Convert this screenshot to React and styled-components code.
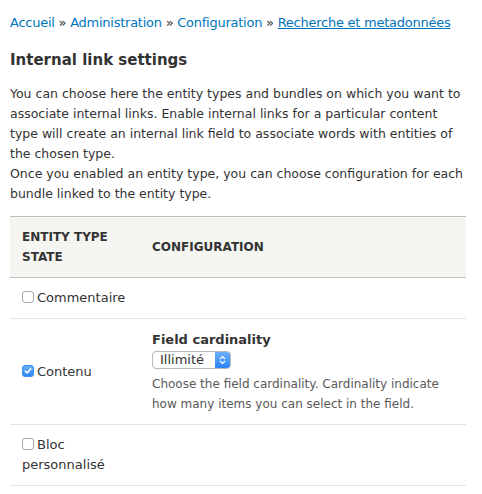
import React from 'react'
import styled, { createGlobalStyle } from 'styled-components'

const LinkColor = "#0074bd";
const TextColor = "#333";
const BorderColor = "#e6e4df";

const GlobalStyle = createGlobalStyle`
  body {
    margin: 0;
    background: #fff;
    font-family: "DejaVu Sans", Verdana, sans-serif;
    color: ${TextColor};
  }
`

const Page = styled.div`
  padding: 14px 10px 0 10px;
  width: 456px;
`

const Breadcrumb = styled.nav`
  font-size: 13px;
  letter-spacing: -0.25px;
  line-height: 18px;
  color: ${TextColor};
  white-space: nowrap;
`

const Crumb = styled.a`
  color: ${LinkColor};
  text-decoration: ${props => props.$current ? 'underline' : 'none'};
`

const Title = styled.h2`
  font-size: 15px;
  font-weight: bold;
  margin: 18px 0 14px 0;
  line-height: 20px;
`

const Text = styled.p`
  font-size: 12.5px;
  line-height: 20px;
  margin: 0;
`

const Table = styled.table`
  width: 100%;
  border-collapse: collapse;
  margin-top: 12px;
`

const HeadCell = styled.th`
  background: #f5f5f2;
  text-align: left;
  text-transform: uppercase;
  font-size: 12px;
  font-weight: bold;
  line-height: 20px;
  padding: 10px 12px;
  border-top: 1px solid #bfbfba;
  border-bottom: 1px solid #bfbfba;
  width: ${props => props.$width || 'auto'};
  color: #333;
`

const Row = styled.tr`
  border-bottom: 1px solid ${BorderColor};
`

const Cell = styled.td`
  padding: 10px 12px;
  font-size: 13px;
  line-height: 20px;
  vertical-align: middle;
`

const CheckLabel = styled.label`
  display: inline;
`

const Box = styled.span`
  display: inline-block;
  width: 12px;
  height: 12px;
  border-radius: 3px;
  vertical-align: -1px;
  margin-right: 3px;
  box-sizing: border-box;
  border: 1px solid ${props => props.$checked ? '#3b8ff6' : '#a8a8a8'};
  background: ${props => props.$checked ? 'linear-gradient(#69adfb, #2f86f5)' : '#fff'};
  position: relative;
`

const Field = styled.div`
  display: flex;
  flex-direction: column;
  align-items: flex-start;
`

const FieldLabel = styled.div`
  font-weight: bold;
  font-size: 13px;
  line-height: 22px;
`

const Select = styled.div`
  display: flex;
  align-items: stretch;
  height: 18px;
  width: 79px;
  box-sizing: border-box;
  border: 1px solid #b8b8b8;
  border-radius: 4px;
  overflow: hidden;
  font-size: 13px;
  background: #fff;
`

const SelectValue = styled.span`
  flex: 1;
  padding-left: 7px;
  line-height: 16px;
`

const SelectArrow = styled.span`
  width: 15px;
  background: linear-gradient(#6cb0fb, #2d84f5);
  display: flex;
  align-items: center;
  justify-content: center;
`

const Description = styled.div`
  font-size: 12px;
  line-height: 20px;
  color: #595959;
  margin-top: 5px;
`

const Checkbox = ({ checked }) => (
  <Box $checked={checked}>
    {checked && (
      <svg width="10" height="10" viewBox="0 0 10 10" style={{ position: 'absolute', left: 0, top: 0 }}>
        <path d="M2.3 5.1 L4.2 7 L7.7 2.7" stroke="#fff" strokeWidth="1.5" fill="none" strokeLinecap="round" strokeLinejoin="round" />
      </svg>
    )}
  </Box>
)

export default function App() {
  return (
    <Page>
      <GlobalStyle />
      <Breadcrumb>
        <Crumb href="#">Accueil</Crumb> » <Crumb href="#">Administration</Crumb> » <Crumb href="#">Configuration</Crumb> » <Crumb href="#" $current>Recherche et metadonnées</Crumb>
      </Breadcrumb>
      <Title>Internal link settings</Title>
      <Text>
        You can choose here the entity types and bundles on which you want to associate internal links. Enable internal links for a particular content type will create an internal link field to associate words with entities of the chosen type.
        <br />
        Once you enabled an entity type, you can choose configuration for each bundle linked to the entity type.
      </Text>
      <Table>
        <thead>
          <tr>
            <HeadCell $width="106px">Entity type state</HeadCell>
            <HeadCell>Configuration</HeadCell>
          </tr>
        </thead>
        <tbody>
          <Row>
            <Cell><CheckLabel><Checkbox />Commentaire</CheckLabel></Cell>
            <Cell />
          </Row>
          <Row>
            <Cell><CheckLabel><Checkbox checked />Contenu</CheckLabel></Cell>
            <Cell>
              <Field>
                <FieldLabel>Field cardinality</FieldLabel>
                <Select>
                  <SelectValue>Illimité</SelectValue>
                  <SelectArrow>
                    <svg width="7" height="10" viewBox="0 0 7 10">
                      <path d="M1 4 L3.5 1.5 L6 4 M1 6 L3.5 8.5 L6 6" stroke="#fff" strokeWidth="1.2" fill="none" />
                    </svg>
                  </SelectArrow>
                </Select>
                <Description>Choose the field cardinality. Cardinality indicate how many items you can select in the field.</Description>
              </Field>
            </Cell>
          </Row>
          <Row>
            <Cell><CheckLabel><Checkbox />Bloc personnalisé</CheckLabel></Cell>
            <Cell />
          </Row>
        </tbody>
      </Table>
    </Page>
  )
}
